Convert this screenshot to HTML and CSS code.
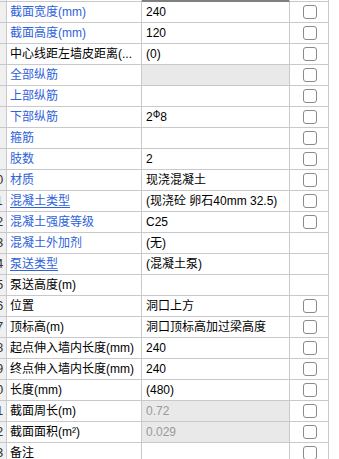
FILE: index.html
```html
<!DOCTYPE html>
<html>

<head>
    <meta charset="utf-8">
    <title>属性</title>
    <link rel="stylesheet" href="styles.css">
</head>

<body>
    <div class="grid">
        <div class="row stub">
            <div class="cell num"></div>
            <div class="cell name"></div>
            <div class="cell value"></div>
            <div class="cell check"></div>
        </div>
        <div class="row">
            <div class="cell num">2</div>
            <div class="cell name link">截面宽度(mm)</div>
            <div class="cell value">240</div>
            <div class="cell check"><span class="box"></span></div>
        </div>
        <div class="row">
            <div class="cell num">3</div>
            <div class="cell name link">截面高度(mm)</div>
            <div class="cell value">120</div>
            <div class="cell check"><span class="box"></span></div>
        </div>
        <div class="row">
            <div class="cell num">4</div>
            <div class="cell name">中心线距左墙皮距离(...</div>
            <div class="cell value">(0)</div>
            <div class="cell check"><span class="box"></span></div>
        </div>
        <div class="row">
            <div class="cell num">5</div>
            <div class="cell name link">全部纵筋</div>
            <div class="cell value disabled"></div>
            <div class="cell check"><span class="box"></span></div>
        </div>
        <div class="row">
            <div class="cell num">6</div>
            <div class="cell name link">上部纵筋</div>
            <div class="cell value"></div>
            <div class="cell check"><span class="box"></span></div>
        </div>
        <div class="row">
            <div class="cell num">7</div>
            <div class="cell name link">下部纵筋</div>
            <div class="cell value">2<span class="rebar">Ф</span>8</div>
            <div class="cell check"><span class="box"></span></div>
        </div>
        <div class="row">
            <div class="cell num">8</div>
            <div class="cell name link">箍筋</div>
            <div class="cell value"></div>
            <div class="cell check"><span class="box"></span></div>
        </div>
        <div class="row">
            <div class="cell num">9</div>
            <div class="cell name link">肢数</div>
            <div class="cell value">2</div>
            <div class="cell check"><span class="box"></span></div>
        </div>
        <div class="row">
            <div class="cell num">10</div>
            <div class="cell name link">材质</div>
            <div class="cell value">现浇混凝土</div>
            <div class="cell check"><span class="box"></span></div>
        </div>
        <div class="row">
            <div class="cell num">11</div>
            <div class="cell name link"><u>混凝土类型</u></div>
            <div class="cell value">(现浇砼 卵石40mm 32.5)</div>
            <div class="cell check"><span class="box"></span></div>
        </div>
        <div class="row">
            <div class="cell num">12</div>
            <div class="cell name link">混凝土强度等级</div>
            <div class="cell value">C25</div>
            <div class="cell check"><span class="box"></span></div>
        </div>
        <div class="row">
            <div class="cell num">13</div>
            <div class="cell name link">混凝土外加剂</div>
            <div class="cell value">(无)</div>
            <div class="cell check"></div>
        </div>
        <div class="row">
            <div class="cell num">14</div>
            <div class="cell name link"><u>泵送类型</u></div>
            <div class="cell value">(混凝土泵)</div>
            <div class="cell check"></div>
        </div>
        <div class="row">
            <div class="cell num">15</div>
            <div class="cell name">泵送高度(m)</div>
            <div class="cell value"></div>
            <div class="cell check"></div>
        </div>
        <div class="row">
            <div class="cell num">16</div>
            <div class="cell name">位置</div>
            <div class="cell value">洞口上方</div>
            <div class="cell check"><span class="box"></span></div>
        </div>
        <div class="row">
            <div class="cell num">17</div>
            <div class="cell name">顶标高(m)</div>
            <div class="cell value">洞口顶标高加过梁高度</div>
            <div class="cell check"><span class="box"></span></div>
        </div>
        <div class="row">
            <div class="cell num">18</div>
            <div class="cell name">起点伸入墙内长度(mm)</div>
            <div class="cell value">240</div>
            <div class="cell check"><span class="box"></span></div>
        </div>
        <div class="row">
            <div class="cell num">19</div>
            <div class="cell name">终点伸入墙内长度(mm)</div>
            <div class="cell value">240</div>
            <div class="cell check"><span class="box"></span></div>
        </div>
        <div class="row">
            <div class="cell num">20</div>
            <div class="cell name">长度(mm)</div>
            <div class="cell value">(480)</div>
            <div class="cell check"><span class="box"></span></div>
        </div>
        <div class="row">
            <div class="cell num">21</div>
            <div class="cell name">截面周长(m)</div>
            <div class="cell value disabled">0.72</div>
            <div class="cell check"><span class="box"></span></div>
        </div>
        <div class="row">
            <div class="cell num">22</div>
            <div class="cell name">截面面积(m²)</div>
            <div class="cell value disabled">0.029</div>
            <div class="cell check"><span class="box"></span></div>
        </div>
        <div class="row">
            <div class="cell num">23</div>
            <div class="cell name">备注</div>
            <div class="cell value"></div>
            <div class="cell check"><span class="box"></span></div>
        </div>
    </div>
</body>

</html>
```

FILE: styles.css
```css
body {
    margin: 0;
    overflow: hidden;
    background-color: #fff;
    font-family: "Liberation Sans", "Noto Sans CJK SC", sans-serif;
    font-size: 12px;
    color: #000;
}

/* the row-number column is scrolled partly out of view */
.grid {
    width: 343px;
    margin-left: -14px;
}

.row {
    display: grid;
    grid-template-columns: 21px 135px 148px 39px;
    height: 21px;
}

.cell {
    box-sizing: border-box;
    display: flex;
    align-items: center;
    white-space: nowrap;
    overflow: hidden;
    border-right: 1px solid #c9c9cc;
    border-bottom: 1px solid #c9c9cc;
    line-height: 20px;
}

.stub {
    height: 2px;
}

.stub .value {
    background-color: #7f7f7f;
    border-bottom-color: #7f7f7f;
}

.num {
    justify-content: center;
    background-color: #f0f0f0;
    color: #333;
    font-size: 13px;
}

.name {
    padding-left: 3px;
}

.link {
    color: #2e62d9;
}

.link u {
    text-decoration-thickness: 1px;
    text-underline-offset: 2px;
}

.value {
    padding-left: 4px;
}

.rebar {
    font-size: 10px;
    position: relative;
    top: -2px;
}

.disabled {
    background-color: #e9e9e9;
    color: #999;
}

.check {
    justify-content: center;
    padding-left: 1px;
}

.box {
    box-sizing: border-box;
    width: 14px;
    height: 14px;
    border: 1px solid #8a8a8a;
    border-radius: 3px;
    background-color: #fff;
}
```
